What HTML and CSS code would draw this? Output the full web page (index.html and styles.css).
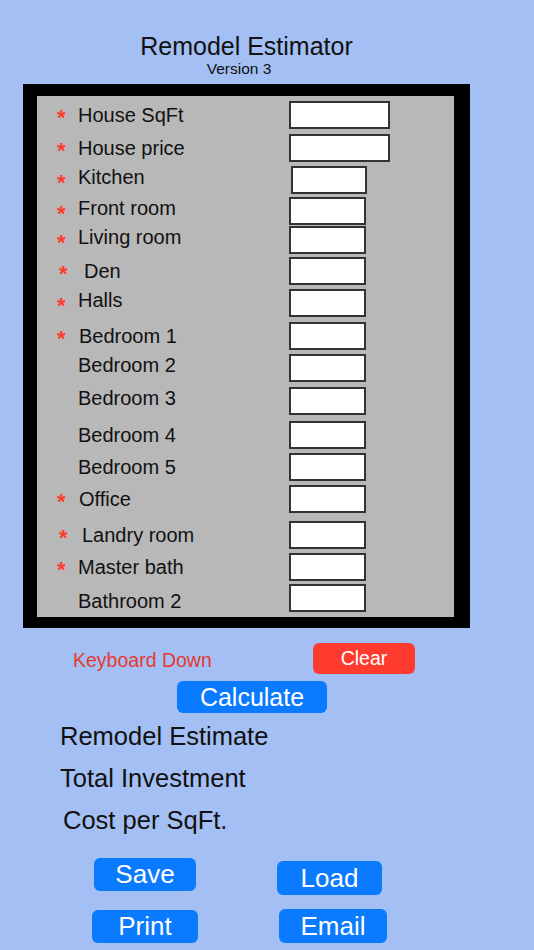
FILE: index.html
```html
<!DOCTYPE html>
<html lang="en">

<head>
    <meta charset="UTF-8">
    <meta name="viewport" content="width=device-width, initial-scale=1.0">
    <title>Remodel Estimator</title>
    <link rel="stylesheet" href="styles.css">
</head>

<body>

    <div class="header">
        <h1 class="title">Remodel Estimator</h1>
        <div class="version">Version 3</div>
    </div>

    <div class="frame">
        <div class="sheet">
            <div class="field"><span class="req">*</span><span class="label">House SqFt</span><input class="box wide" type="text"></div>
            <div class="field"><span class="req">*</span><span class="label">House price</span><input class="box wide" type="text"></div>
            <div class="field up"><span class="req">*</span><span class="label">Kitchen</span><input class="box kitchen" type="text"></div>
            <div class="field up"><span class="req">*</span><span class="label">Front room</span><input class="box" type="text"></div>
            <div class="field up"><span class="req">*</span><span class="label">Living room</span><input class="box" type="text"></div>
            <div class="field den"><span class="req">*</span><span class="label">Den</span><input class="box" type="text"></div>
            <div class="field up"><span class="req">*</span><span class="label">Halls</span><input class="box" type="text"></div>
            <div class="field nudge"><span class="req">*</span><span class="label">Bedroom 1</span><input class="box" type="text"></div>
            <div class="field up"><span class="req"></span><span class="label">Bedroom 2</span><input class="box" type="text"></div>
            <div class="field up"><span class="req"></span><span class="label">Bedroom 3</span><input class="box" type="text"></div>
            <div class="field"><span class="req"></span><span class="label">Bedroom 4</span><input class="box" type="text"></div>
            <div class="field"><span class="req"></span><span class="label">Bedroom 5</span><input class="box" type="text"></div>
            <div class="field nudge"><span class="req">*</span><span class="label">Office</span><input class="box" type="text"></div>
            <div class="field landry"><span class="req">*</span><span class="label">Landry room</span><input class="box" type="text"></div>
            <div class="field"><span class="req">*</span><span class="label">Master bath</span><input class="box" type="text"></div>
            <div class="field down"><span class="req"></span><span class="label">Bathroom 2</span><input class="box" type="text"></div>
        </div>
    </div>

    <div class="actions">
        <span class="keyboard">Keyboard Down</span>
        <button class="btn clear">Clear</button>
    </div>
    <button class="btn calculate">Calculate</button>

    <div class="results">
        <div class="result">Remodel Estimate</div>
        <div class="result">Total Investment</div>
        <div class="result cost">Cost per SqFt.</div>
    </div>

    <div class="file-row top">
        <button class="btn save">Save</button>
        <button class="btn load">Load</button>
    </div>
    <div class="file-row bottom">
        <button class="btn print">Print</button>
        <button class="btn email">Email</button>
    </div>

</body>

</html>
```

FILE: styles.css
```css
body {
    margin: 0;
    min-height: 950px;
    background-color: #a3bff4;
    font-family: "Liberation Sans", Arial, sans-serif;
    color: #111;
}

.header {
    width: 447px;
    margin-left: 23px;
    padding-top: 35px;
    text-align: center;
}

.title {
    margin: 0;
    font-size: 25px;
    font-weight: normal;
    line-height: 22px;
}

.version {
    margin-top: 5px;
    padding-right: 15px;
    font-size: 15.5px;
    line-height: 14px;
}

.frame {
    box-sizing: border-box;
    width: 447px;
    margin: 8px 0 0 23px;
    border-style: solid;
    border-color: #000;
    border-width: 12px 16px 11px 14px;
}

.sheet {
    background-color: #b8b8b8;
    padding: 5px 0 4px 20px;
    display: grid;
    grid-template-rows: 33px 32px 31px 29px 31px 32px 33px 32px 33px 34px 32px 32px 36px 32px 31px 29px;
}

.field {
    display: grid;
    grid-template-columns: 21px 211px auto;
    align-items: start;
}

.req {
    color: #ff3b30;
    font-size: 22px;
    font-weight: bold;
    line-height: 28px;
    padding-top: 3px;
}

.label {
    font-size: 20px;
    line-height: 28px;
}

.box {
    box-sizing: border-box;
    width: 77px;
    height: 28px;
    margin: 0;
    padding: 0;
    border: 2px solid #333;
    background-color: #fff;
}

.box.wide {
    width: 101px;
}

.box.kitchen {
    width: 76px;
    margin-left: 2px;
}

.field.up .label {
    margin-top: -3px;
}

.field.down .label {
    margin-top: 3px;
}

.field.nudge .label {
    padding-left: 1px;
}

.field.den .req,
.field.landry .req {
    padding-left: 2px;
}

.field.den .label {
    padding-left: 6px;
}

.field.landry .label {
    padding-left: 4px;
}

.actions {
    display: flex;
    align-items: flex-start;
    margin: 15px 0 0 73px;
}

.keyboard {
    width: 240px;
    padding-top: 3px;
    color: #e53a2f;
    font-size: 19.5px;
    line-height: 28px;
}

.btn {
    border: none;
    border-radius: 6px;
    padding: 0;
    color: #fff;
    background-color: #0a7aff;
    font-family: "Liberation Sans", Arial, sans-serif;
    cursor: pointer;
}

.clear {
    width: 102px;
    height: 31px;
    background-color: #ff3b30;
    font-size: 19.5px;
}

.calculate {
    display: block;
    width: 150px;
    height: 32px;
    margin: 7px 0 0 177px;
    font-size: 25px;
}

.results {
    display: flex;
    flex-direction: column;
    gap: 12px;
    margin: 8px 0 0 60px;
}

.result {
    font-size: 25.5px;
    line-height: 30px;
}

.result.cost {
    padding-left: 3px;
}

.file-row {
    display: flex;
    align-items: flex-start;
}

.file-row.top {
    margin-top: 23px;
}

.file-row.bottom {
    margin-top: 14px;
}

.save,
.load,
.print,
.email {
    font-size: 26px;
}

.save {
    width: 102px;
    height: 33px;
    margin-left: 94px;
}

.load {
    width: 105px;
    height: 34px;
    margin: 3px 0 0 81px;
}

.print {
    width: 106px;
    height: 33px;
    margin: 1px 0 0 92px;
}

.email {
    width: 108px;
    height: 34px;
    margin-left: 81px;
}
```
